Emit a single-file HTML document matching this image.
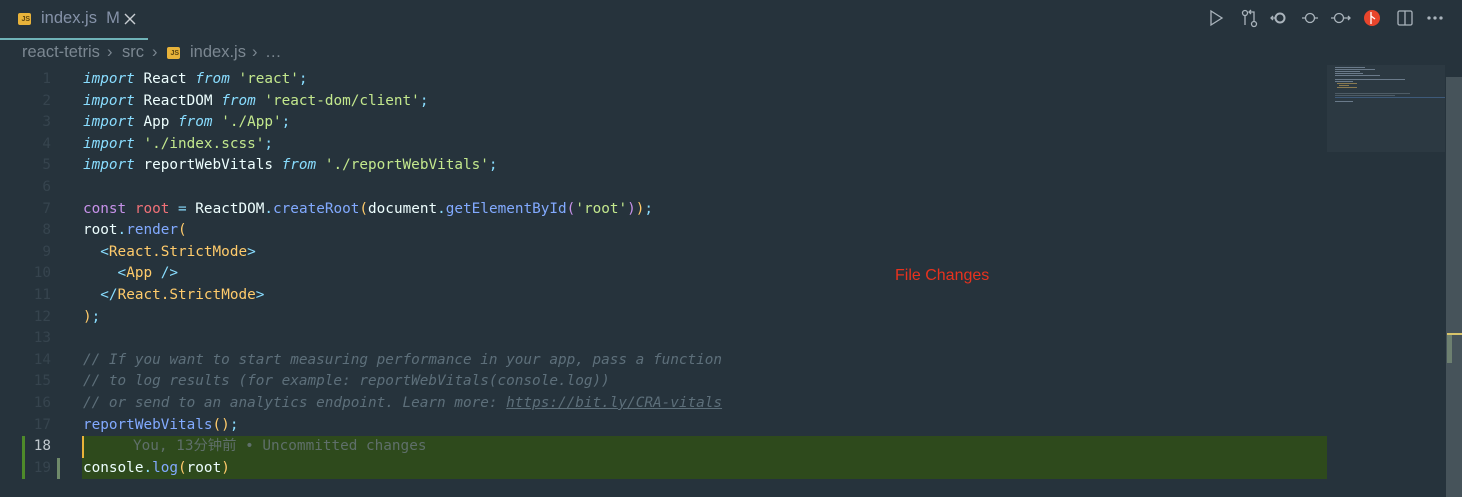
<!DOCTYPE html>
<html><head><meta charset="utf-8"><style>
*{margin:0;padding:0;box-sizing:border-box}
body{width:1462px;height:497px;background:#26333c;overflow:hidden;position:relative;font-family:"Liberation Sans",sans-serif}
.tab{position:absolute;left:0;top:0;width:148px;height:40px;border-bottom:2px solid #6fb3b8}
.tab .t{position:absolute;left:41px;top:9px;font-size:16.5px;color:#8592a8}
.js{position:absolute;width:13px;height:12px;background:#e8b33a;border-radius:2px;font-size:7px;color:#5a4310;font-weight:bold;line-height:13px;text-align:right;padding-right:1px}
.bc{position:absolute;top:43px;font-size:16.5px;color:#7b8791;white-space:pre}
.code{position:absolute;left:0;top:69px;width:1327px;font-family:"DejaVu Sans Mono","Liberation Mono",monospace;font-size:14.35px}
.ln{height:21.6px;line-height:21.6px;position:relative;white-space:pre}
.n{position:absolute;left:0;width:51px;text-align:right;color:#36444e}
.c{position:absolute;left:83px;color:#eeffff}
.k{color:#89ddff;font-style:italic}
.s{color:#c3e88d}.f{color:#82aaff}.p{color:#ffcb6b}.v{color:#f07178}.cn{color:#c792ea}.t2{color:#89ddff}.cm{color:#5d6f7a;font-style:italic}
.hl{background:#2e4a1c}
.mm{position:absolute;height:1px}
</style></head><body>
<div class="tab"><div class="js" style="left:18px;top:13px">JS</div><span class="t">index.js&nbsp; M</span>
<svg style="position:absolute;left:124px;top:13px" width="12" height="12"><path d="M1 1L11 11M11 1L1 11" stroke="#c8cdd2" stroke-width="1.4"/></svg></div>
<span class="bc" style="left:22px">react-tetris</span>
<span class="bc" style="left:107px">›</span>
<span class="bc" style="left:122px">src</span>
<span class="bc" style="left:152px">›</span>
<div class="js" style="left:167px;top:47px">JS</div>
<span class="bc" style="left:190px">index.js</span>
<span class="bc" style="left:252px">›</span>
<span class="bc" style="left:265px">…</span>
<svg style="position:absolute;left:1190px;top:0" width="272" height="40" fill="none" stroke="#aab4bc" stroke-width="1.3">
<path d="M21 11L32 18L21 25Z"/>
<circle cx="55" cy="13" r="2.5"/><circle cx="64" cy="24" r="2.5"/><path d="M55 16V25M64 21V12H59M61 10L59 12L61 14"/>
<circle cx="90" cy="18" r="4.5" stroke-width="2"/><path d="M81 18H85.5M83 16L81 18L83 20"/>
<circle cx="120" cy="18" r="4.5"/><path d="M112 18H115.5M124.5 18H128"/>
<circle cx="149" cy="18" r="4.5"/><path d="M141 18H144.5M153.5 18H160M158 16L160 18L158 20"/>
<circle cx="182" cy="18" r="8" fill="#e8452c" stroke="none"/><path d="M181 12V24M181 16L185 19" stroke="#fff"/>
<rect x="208" y="11" width="14" height="14" rx="1.5"/><path d="M215 11V25"/>
<circle cx="239" cy="18" r="1" fill="#aab4bc"/><circle cx="245" cy="18" r="1" fill="#aab4bc"/><circle cx="251" cy="18" r="1" fill="#aab4bc"/>
</svg>
<div class="code">
<div class="ln"><span class="n">1</span><span class="c"><span class="k">import</span> React <span class="k">from</span> <span class="s">'react'</span><span class="t2">;</span></span></div>
<div class="ln"><span class="n">2</span><span class="c"><span class="k">import</span> ReactDOM <span class="k">from</span> <span class="s">'react-dom/client'</span><span class="t2">;</span></span></div>
<div class="ln"><span class="n">3</span><span class="c"><span class="k">import</span> App <span class="k">from</span> <span class="s">'./App'</span><span class="t2">;</span></span></div>
<div class="ln"><span class="n">4</span><span class="c"><span class="k">import</span> <span class="s">'./index.scss'</span><span class="t2">;</span></span></div>
<div class="ln"><span class="n">5</span><span class="c"><span class="k">import</span> reportWebVitals <span class="k">from</span> <span class="s">'./reportWebVitals'</span><span class="t2">;</span></span></div>
<div class="ln"><span class="n">6</span></div>
<div class="ln"><span class="n">7</span><span class="c"><span class="cn">const</span> <span class="v">root</span> <span class="t2">=</span> ReactDOM<span class="t2">.</span><span class="f">createRoot</span><span class="p">(</span>document<span class="t2">.</span><span class="f">getElementById</span><span class="cn">(</span><span class="s">'root'</span><span class="cn">)</span><span class="p">)</span><span class="t2">;</span></span></div>
<div class="ln"><span class="n">8</span><span class="c">root<span class="t2">.</span><span class="f">render</span><span class="p">(</span></span></div>
<div class="ln"><span class="n">9</span><span class="c">  <span class="t2">&lt;</span><span class="p">React.StrictMode</span><span class="t2">&gt;</span></span></div>
<div class="ln"><span class="n">10</span><span class="c">    <span class="t2">&lt;</span><span class="p">App</span> <span class="t2">/&gt;</span></span></div>
<div class="ln"><span class="n">11</span><span class="c">  <span class="t2">&lt;/</span><span class="p">React.StrictMode</span><span class="t2">&gt;</span></span></div>
<div class="ln"><span class="n">12</span><span class="c"><span class="p">)</span><span class="t2">;</span></span></div>
<div class="ln"><span class="n">13</span></div>
<div class="ln"><span class="n">14</span><span class="c cm">// If you want to start measuring performance in your app, pass a function</span></div>
<div class="ln"><span class="n">15</span><span class="c cm">// to log results (for example: reportWebVitals(console.log))</span></div>
<div class="ln"><span class="n">16</span><span class="c cm">// or send to an analytics endpoint. Learn more: <u>https://bit.ly/CRA-vitals</u></span></div>
<div class="ln"><span class="n">17</span><span class="c"><span class="f">reportWebVitals</span><span class="p">()</span><span class="t2">;</span></span></div>
<div class="ln"><span class="n" style="color:#c0c8ce">18</span><div class="hl" style="position:absolute;left:82px;right:0;top:0;bottom:0;border-left:2px solid #e8b33a"></div><span class="c" style="left:133px;color:#5f6f6a;font-family:'DejaVu Sans Mono','Noto Sans CJK SC',monospace">You, 13分钟前 • Uncommitted changes</span></div>
<div class="ln"><span class="n">19</span><div class="hl" style="position:absolute;left:82px;right:0;top:0;bottom:0"></div><span class="c">console<span class="t2">.</span><span class="f">log</span><span class="p">(</span>root<span class="p">)</span></span></div>
</div>
<div style="position:absolute;left:22px;top:436px;width:3px;height:43px;background:#4e8a2a"></div>
<div style="position:absolute;left:57px;top:458px;width:3px;height:21px;background:#6f8a6a"></div>
<div style="position:absolute;left:895px;top:267px;font-size:16px;color:#e8321e">File Changes</div>
<div style="position:absolute;left:1327px;top:65px;width:118px;height:87px;background:#2c3942"></div>
<div class="mm" style="left:1335px;top:67px;width:30px;background:#6a7a8a"></div>
<div class="mm" style="left:1335px;top:69px;width:40px;background:#6a7a8a"></div>
<div class="mm" style="left:1335px;top:71px;width:25px;background:#6a7a8a"></div>
<div class="mm" style="left:1335px;top:73px;width:28px;background:#6a7a8a"></div>
<div class="mm" style="left:1335px;top:75px;width:45px;background:#6a7a8a"></div>
<div class="mm" style="left:1335px;top:79px;width:70px;background:#6a7a8a"></div>
<div class="mm" style="left:1335px;top:81px;width:18px;background:#6a7a8a"></div>
<div class="mm" style="left:1337px;top:83px;width:20px;background:#8a7a50"></div>
<div class="mm" style="left:1339px;top:85px;width:10px;background:#8a7a50"></div>
<div class="mm" style="left:1337px;top:87px;width:20px;background:#8a7a50"></div>
<div class="mm" style="left:1335px;top:93px;width:75px;background:#4e5c66"></div>
<div class="mm" style="left:1335px;top:95px;width:60px;background:#4e5c66"></div>
<div class="mm" style="left:1335px;top:97px;width:110px;background:#3e5a7a"></div>
<div class="mm" style="left:1335px;top:101px;width:18px;background:#6a7a8a"></div>
<div style="position:absolute;left:1446px;top:77px;width:16px;height:420px;background:#46535a"></div>
<div style="position:absolute;left:1447px;top:333px;width:15px;height:2px;background:#d8c46a"></div>
<div style="position:absolute;left:1447px;top:335px;width:5px;height:28px;background:#6d8070"></div>
</body></html>
